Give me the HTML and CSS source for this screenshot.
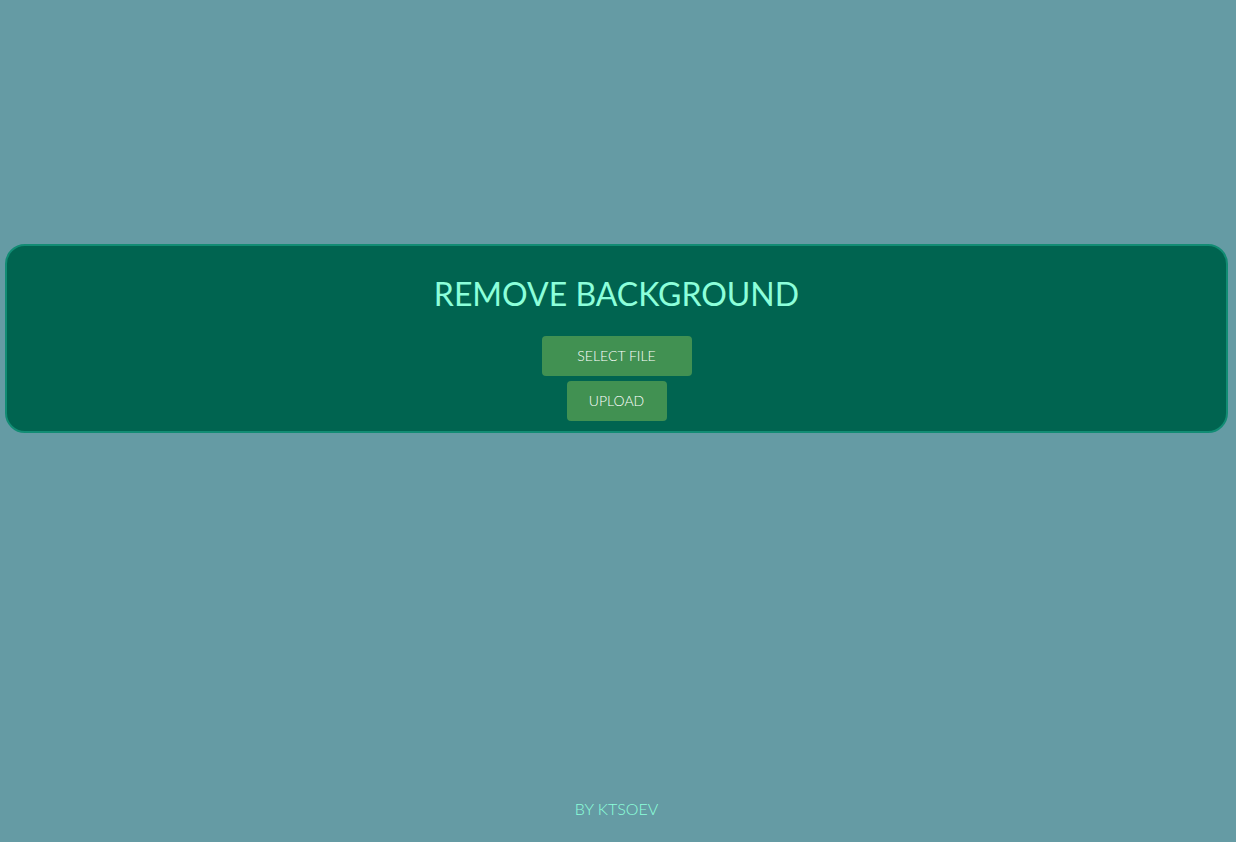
FILE: index.html
```html
<!DOCTYPE html>
<html lang="en">
<head>
<meta charset="utf-8">
<meta name="viewport" content="width=device-width, initial-scale=1">
<title>Remove Background</title>
<link rel="stylesheet" href="styles.css">
</head>
<body class="page">
<main class="main">
<form class="card">
<h1 class="title">REMOVE BACKGROUND</h1>
<button class="button button-select" type="button">SELECT FILE</button>
<button class="button button-upload" type="button">UPLOAD</button>
</form>
</main>
<footer class="footer">BY KTSOEV</footer>
</body>
</html>
```
FILE: styles.css
```css
* {
  box-sizing: border-box;
}

.page {
  display: grid;
  grid-template-rows: 29vh auto 1fr;
  min-height: 100vh;
  margin: 0;
  padding: 0 8px 20px 5px;
  background: #659ba4;
  font-family: Lato, "Open Sans", sans-serif;
  font-weight: 300;
}

.main {
  grid-row: 2;
}

.card {
  display: flex;
  flex-direction: column;
  align-items: center;
  gap: 5px;
  padding: 26px 10px 10px;
  border: 2px solid #128c74;
  border-radius: 20px;
  background: #006450;
}

.title {
  margin: 0 0 15px;
  color: #8cffda;
  font-size: 32px;
  font-weight: 400;
  line-height: 44px;
  text-align: center;
}

.button {
  height: 40px;
  padding: 0 0 2px;
  border: 0;
  border-radius: 4px;
  background: #419152;
  color: #fff;
  font: inherit;
  font-size: 14px;
  cursor: pointer;
}

.button-select {
  width: 150px;
}

.button-upload {
  width: 100px;
}

.footer {
  grid-row: 3;
  align-self: end;
  color: #8cffda;
  font-size: 16px;
  line-height: 26px;
  text-align: center;
}
```
